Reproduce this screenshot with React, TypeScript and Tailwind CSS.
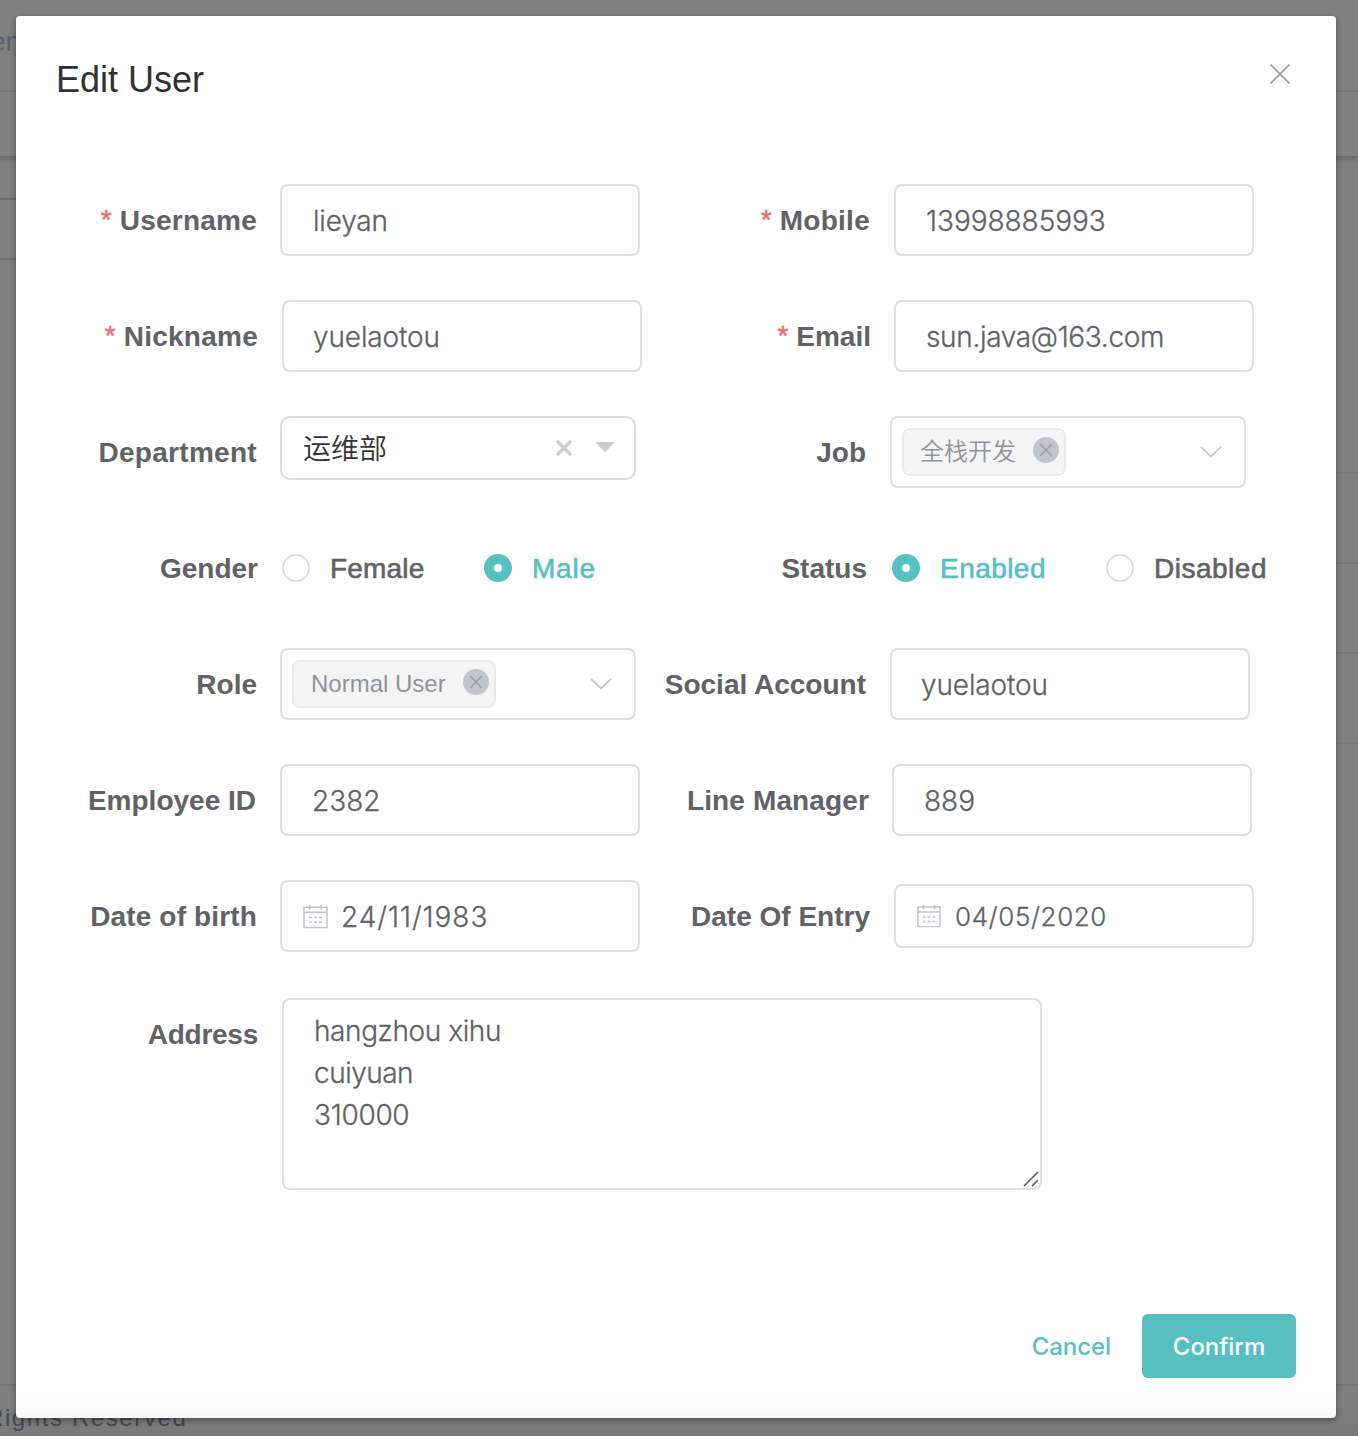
import type { ReactNode } from 'react'

const HELV = "font-['Liberation_Sans',Arial,'Noto_Sans_CJK_SC',sans-serif]"
const INTER = "font-['Inter','Noto_Sans_CJK_SC',sans-serif]"

function Label({ className, required, tight, children }: { className: string; required?: boolean; tight?: string; children: ReactNode }) {
  return (
    <div className={`flex h-[72px] shrink-0 items-center justify-end whitespace-nowrap pt-0.5 text-[28px] font-bold text-[#606266] ${tight ?? ''} ${className}`}>
      {required && <span className="mr-2 pb-0.5 font-normal tracking-normal text-[#e8706e] [-webkit-text-stroke:0.5px_#e8706e]">*</span>}
      <span>{children}</span>
    </div>
  )
}

function Input({ className = 'h-[72px] w-[360px] pl-[30px] text-[28px]', children }: { className?: string; children: ReactNode }) {
  return (
    <div className={`flex shrink-0 items-center rounded-lg border-2 border-[#dcdfe6] bg-white pt-px font-light text-[#606266] [-webkit-text-stroke:0.3px_#606266] ${INTER} ${className}`}>
      {children}
    </div>
  )
}

function CalendarIcon({ className }: { className: string }) {
  return (
    <svg viewBox="0 0 26 26" className={className} fill="none" stroke="#c0c4cc" strokeWidth="1.6">
      <path d="M1 3.3h24v21.2H1zM1 8.6h24M7 1v4.6M19 1v4.6" />
      <path d="M6.2 14h3.2M11.4 14h3.2M16.6 14h3.2M6.2 19h3.2M11.4 19h3.2M16.6 19h3.2" />
    </svg>
  )
}

function TagSelect({ tagClass, children }: { tagClass: string; children: ReactNode }) {
  return (
    <div className="flex h-[72px] w-[356px] shrink-0 items-center justify-between rounded-lg border-2 border-[#dcdfe6] bg-white pl-[10px] pr-[22px]">
      <div className={`flex h-12 items-center justify-between rounded-lg border-2 border-[#e9e9eb] bg-[#f4f4f5] pr-[5px] text-2xl text-[#909399] ${tagClass}`}>
        <span className="whitespace-nowrap">{children}</span>
        <svg viewBox="0 0 26 26" className="-mt-1 size-[26px]">
          <circle cx="13" cy="13" r="13" fill="#c0c4cc" />
          <path d="M7.2 7.2l11.6 11.6M18.8 7.2L7.2 18.8" stroke="#909399" strokeWidth="1.2" />
        </svg>
      </div>
      <svg viewBox="0 0 22 12" className="-mt-px h-3 w-[22px]" fill="none" stroke="#c0c4cc" strokeWidth="1.6" strokeLinecap="round">
        <path d="M1.2 1.2L11 10.6l9.8-9.4" />
      </svg>
    </div>
  )
}

function Radio({ checked, className, children }: { checked?: boolean; className: string; children: ReactNode }) {
  return (
    <div className={`flex h-[72px] items-center whitespace-nowrap text-[28px] ${checked ? 'text-[#58bfc1] [-webkit-text-stroke:0.6px_#58bfc1]' : 'text-[#606266] [-webkit-text-stroke:0.6px_#606266]'} ${className}`}>
      {checked ? (
        <span className="mr-5 flex size-7 items-center justify-center rounded-full bg-[#58bfc1]"><span className="size-2 rounded-full bg-white" /></span>
      ) : (
        <span className="mr-5 size-7 rounded-full border-2 border-[#dcdfe6]" />
      )}
      <span className="pt-0.5">{children}</span>
    </div>
  )
}

function Row({ left, right }: { left: ReactNode; right: ReactNode }) {
  return (
    <div className="flex h-[72px]">
      <div className="flex w-[604px] shrink-0">{left}</div>
      <div className="flex">{right}</div>
    </div>
  )
}

function Backdrop() {
  return (
    <div className="col-start-1 row-start-1 flex flex-col overflow-hidden bg-[#808080]">
      <div className="h-[92px] border-b-2 border-[#7b7b7b] pt-[25px] text-[28px] leading-[34px] text-[#596172]">
        <span className="-ml-[10px]">en</span>
      </div>
      <div className="h-[66px] border-b-2 border-[#6f6f78] shadow-[0_2px_5px_rgba(0,0,0,0.14)]" />
      <div className="flex h-[1226px] justify-between">
        <div className="w-4 pt-10">
          <div className="h-[62px] border-y-2 border-[#6f7077]" />
        </div>
        <div className="w-[22px] pt-[314px]">
          <div className="h-[92px] border-y-2 border-[#77777d]" />
          <div className="h-[90px] border-b-2 border-[#77777d]" />
          <div className="h-[90px] border-b-2 border-[#77777d]" />
        </div>
      </div>
      <div className="flex-1 whitespace-nowrap border-t-2 border-[#757575] pt-[18px] text-2xl leading-[28px] tracking-[1.6px] text-[#454c57]">
        <span className="-ml-[14px]">Rights Reserved</span>
      </div>
    </div>
  )
}

export default function App() {
  return (
    <div className={`relative grid h-[1436px] w-[1358px] overflow-hidden ${HELV}`}>
      <Backdrop />
      <div className="z-10 col-start-1 row-start-1 mx-4 mt-4 flex h-[1402px] w-[1320px] flex-col rounded bg-white px-10 shadow-[0_2px_6px_rgba(0,0,0,0.4)]">
        <div className="flex h-[168px] shrink-0 items-start justify-between pt-[43px]">
          <h1 className="text-4xl leading-[41px] text-[#303133]">Edit User</h1>
          <svg viewBox="0 0 20 20" className="mr-[6px] mt-[5px] size-5" stroke="#909399" strokeWidth="1.7" strokeLinecap="round">
            <path d="M1 1l18 18M19 1L1 19" />
          </svg>
        </div>
        <div className="flex flex-col gap-11">
          <Row
            left={<><Label className="w-[224px] pr-[23px]" required tight="tracking-[0.24px]">Username</Label><Input><span className="ml-px tracking-[-0.2px]">lieyan</span></Input></>}
            right={<><Label className="w-[234px] pr-6" required tight="tracking-[0.28px]">Mobile</Label><Input><span className="tracking-[-0.05px]">13998885993</span></Input></>}
          />
          <Row
            left={<><Label className="w-[226px] pr-6" required tight="tracking-[0.25px]">Nickname</Label><Input><span className="-ml-px tracking-[-0.13px]">yuelaotou</span></Input></>}
            right={<><Label className="w-[234px] pr-[23px]" required>Email</Label><Input><span className="tracking-[-0.34px]">sun.java@163.com</span></Input></>}
          />
          <Row
            left={
              <>
                <Label className="w-[224px] pr-[23px]" tight="tracking-[0.3px]">Department</Label>
                <div className="flex h-16 w-[356px] items-center rounded-[10px] border-2 border-[#ddd] bg-white pl-[21px] pr-5 text-[28px] text-[#333]">
                  <span className="flex-1 pt-[3px] font-[350] leading-10">运维部</span>
                  <svg viewBox="0 0 16 16" className="mr-6 size-4" stroke="#ccc" strokeWidth="3.4" strokeLinecap="round">
                    <path d="M1.9 1.9l12.2 12.2M14.1 1.9L1.9 14.1" />
                  </svg>
                  <svg viewBox="0 0 18 10" className="mb-0.5 h-[10px] w-[18px]" fill="#ccc">
                    <path d="M1 0h16q1.5.2.5 1.4L10 9.3q-1 1-2 0L.5 1.4Q-.5.2 1 0z" />
                  </svg>
                </div>
              </>
            }
            right={<><Label className="w-[230px] pr-6">Job</Label><TagSelect tagClass="w-[164px] pl-4 font-[350]">全栈开发</TagSelect></>}
          />
          <Row
            left={<><Label className="w-[226px] pr-6">Gender</Label><Radio className="w-[202px] tracking-[0.2px]">Female</Radio><Radio checked className="tracking-[0.8px]">Male</Radio></>}
            right={<><Label className="w-[232px] pr-[25px]">Status</Label><Radio checked className="w-[214px] tracking-[0.45px]">Enabled</Radio><Radio className="tracking-[0.5px]">Disabled</Radio></>}
          />
          <Row
            left={<><Label className="w-[224px] pr-[23px]">Role</Label><TagSelect tagClass="w-[204px] pl-[17px]">Normal User</TagSelect></>}
            right={<><Label className="w-[230px] pr-6">Social Account</Label><Input><span className="-ml-px tracking-[-0.13px]">yuelaotou</span></Input></>}
          />
          <Row
            left={<><Label className="w-[224px] pr-6">Employee ID</Label><Input>2382</Input></>}
            right={<><Label className="w-[232px] pr-[23px]" tight="tracking-[0.13px]">Line Manager</Label><Input>889</Input></>}
          />
          <Row
            left={
              <>
                <Label className="w-[224px] pr-[23px]" tight="tracking-[0.15px]">Date of birth</Label>
                <Input className="h-[72px] w-[360px] pl-[21px] text-[28px]"><CalendarIcon className="mb-px mr-[13px] size-[25px]" /><span className="tracking-[0.95px]">24/11/1983</span></Input>
              </>
            }
            right={
              <div className="flex items-center">
                <Label className="w-[234px] pr-6">Date Of Entry</Label>
                <Input className="h-16 w-[360px] pl-[21px] text-[26px]"><CalendarIcon className="mb-px mr-[14px] size-6" /><span className="tracking-[0.6px]">04/05/2020</span></Input>
              </div>
            }
          />
        </div>
        <div className="mt-[46px] flex">
          <Label className="w-[226px] pr-6" tight="tracking-[-0.25px]">Address</Label>
          <div className={`relative h-48 w-[760px] rounded-lg border-2 border-[#dcdfe6] px-[30px] pt-[10px] text-[28px] font-light leading-[42px] text-[#606266] [-webkit-text-stroke:0.3px_#606266] ${INTER}`}>
            <p className="tracking-[-0.4px]">hangzhou xihu</p>
            <p className="tracking-[-0.5px]">cuiyuan</p>
            <p className="tracking-[-0.3px]">310000</p>
            <svg viewBox="0 0 16 16" className="absolute bottom-px right-px size-4" stroke="#555" strokeWidth="1.5">
              <path d="M1 15L15 1M9 15l6-6" />
            </svg>
          </div>
        </div>
        <div className={`mt-[124px] flex h-16 items-center justify-end text-2xl font-[450] tracking-[-0.05px] ${INTER}`}>
          <button className="mr-[31px] pt-px text-[#58bfc1]">Cancel</button>
          <button className="h-16 w-[154px] rounded-md bg-[#58bfc1] pt-px text-white">Confirm</button>
        </div>
      </div>
      <div className="pointer-events-none absolute inset-x-0 bottom-0 z-20 h-[60px] bg-linear-to-b from-transparent via-black/[0.012] to-black/[0.06]" />
    </div>
  )
}
